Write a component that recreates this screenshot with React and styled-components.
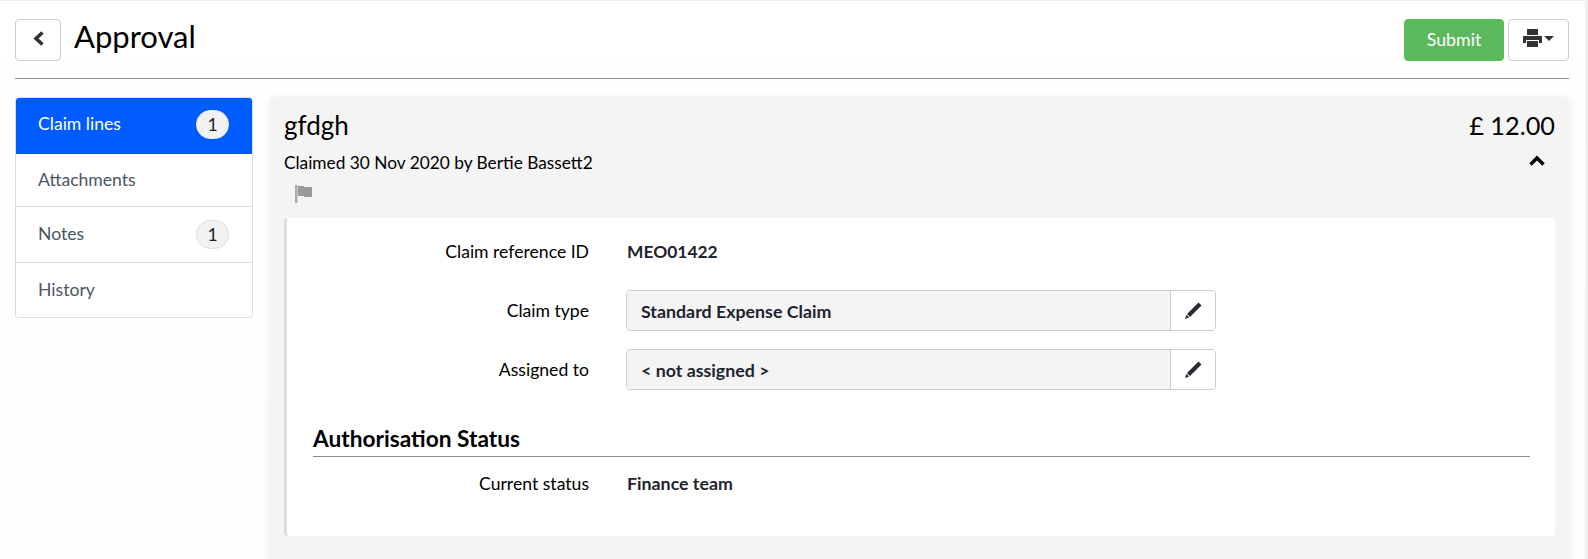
import React from 'react'
import styled, { createGlobalStyle } from 'styled-components'

const GlobalStyle = createGlobalStyle`
  html, body {
    margin: 0;
    height: 559px;
    overflow: hidden;
    background: #fff;
    font-family: Lato, "Open Sans", sans-serif;
    color: #000;
  }
  * { box-sizing: border-box; }
`

const Page = styled.div`
  height: 559px;
  border-top: 1px solid #ececec;
  border-right: 3px solid #f0f0f0;
  padding: 18px 16px 0 15px;
  background: linear-gradient(180deg, #fff 0%, #fdfdfd 100%);
  overflow: hidden;
`

const Header = styled.header`
  display: flex;
  align-items: flex-start;
  justify-content: space-between;
  height: 60px;
  border-bottom: 1px solid #8e8e8e;
`

const TitleGroup = styled.div`
  display: flex;
  align-items: flex-start;
  gap: 13px;
`

const Title = styled.h1`
  margin: -2px 0 0;
  font-size: 31px;
  font-weight: 400;
  line-height: 38px;
`

const Actions = styled.div`
  display: flex;
  gap: 4px;
`

const IconButton = styled.button`
  display: flex;
  align-items: center;
  justify-content: center;
  gap: 2px;
  width: ${p => p.$width}px;
  height: 42px;
  padding: 0 0 4px;
  border: 1px solid #ccc;
  border-radius: 4px;
  background: #fff;
  color: #333;
`

const Caret = styled.span`
  width: 0;
  height: 0;
  border-left: 5px solid transparent;
  border-right: 5px solid transparent;
  border-top: 5px solid #333;
`

const SubmitButton = styled.button`
  width: 100px;
  height: 42px;
  padding: 0 0 2px;
  border: 1px solid #4cc84c;
  border-radius: 4px;
  background: #5cb85c;
  color: #fff;
  font: 400 17.8px Lato, sans-serif;
`

const Body = styled.div`
  display: flex;
  align-items: flex-start;
  gap: 17px;
  margin-top: 18px;
`

const SideNav = styled.nav`
  flex: 0 0 238px;
  display: flex;
  flex-direction: column;
  border: 1px solid #ddd;
  border-radius: 4px;
  background: #fff;
  overflow: hidden;
`

const NavItem = styled.div`
  display: flex;
  align-items: center;
  justify-content: space-between;
  height: ${p => p.$height}px;
  margin: ${p => (p.$active ? '-1px -1px 0' : '0')};
  padding: 0 ${p => (p.$active ? '24px' : '23px')} ${p => p.$lift}px ${p => (p.$active ? '23px' : '22px')};
  border-bottom: ${p => (p.$last || p.$active ? 'none' : '1px solid #ddd')};
  background: ${p => (p.$active ? '#005cff' : '#fff')};
  color: ${p => (p.$active ? '#fff' : '#4a5564')};
  font-size: 17.6px;
`

const Badge = styled.span`
  display: flex;
  align-items: center;
  justify-content: center;
  width: 33px;
  height: 29px;
  margin-top: 3px;
  border: 1px solid ${p => (p.$active ? '#eee' : '#ddd')};
  border-radius: 15px;
  background: #f2f2f2;
  color: #222;
  font-size: 17.6px;
`

const Panel = styled.main`
  flex: 1;
  height: 470px;
  padding: 11px 14px 0;
  border-radius: 4px;
  background: #f4f4f4;
  box-shadow: 0 1px 10px rgba(0, 0, 0, 0.07);
`

const PanelHead = styled.div`
  display: flex;
  align-items: center;
  justify-content: space-between;
  line-height: 34px;
`

const ClaimName = styled.span`
  font-size: 26px;
`

const Amount = styled.span`
  font-size: 25.3px;
`

const SubRow = styled.div`
  display: flex;
  align-items: center;
  justify-content: space-between;
  height: 27px;
  margin-top: 7px;
  padding-right: 10px;
  font-size: 17.3px;
`

const FlagRow = styled.div`
  height: 42px;
  padding: 9px 0 0 11px;
`

const Card = styled.section`
  height: 318px;
  padding: 14px 25px 0 0;
  border-left: 3px solid #ddd;
  border-radius: 4px;
  background: #fff;
`

const Row = styled.div`
  display: grid;
  grid-template-columns: 302px 1fr;
  column-gap: 38px;
  align-items: center;
  height: ${p => p.$height}px;
  margin-top: ${p => p.$gap || 0}px;
  font-size: 17.6px;
`

const Label = styled.span`
  text-align: right;
`

const Value = styled.strong`
  font-weight: 700;
  font-size: ${p => p.$size || 17.8}px;
  color: #1d2430;
`

const InputGroup = styled.div`
  display: flex;
  width: 590px;
  height: 41px;
  margin-left: -1px;
  border: 1px solid #ccc;
  border-radius: 4px;
  overflow: hidden;
`

const InputValue = styled.div`
  flex: 1;
  display: flex;
  align-items: center;
  padding-left: 14px;
  background: #f4f4f4;
  font-weight: 700;
  font-size: 17.8px;
  color: #1d2430;
`

const EditButton = styled.div`
  flex: 0 0 45px;
  display: flex;
  align-items: center;
  justify-content: center;
  border-left: 1px solid #ccc;
  background: #fff;
`

const SectionTitle = styled.h2`
  margin: 26px 0 0 26px;
  padding-bottom: 3px;
  border-bottom: 1px solid #8e8e8e;
  font-size: 22.7px;
  font-weight: 700;
  line-height: 28px;
`

const ChevronSvg = styled.svg`
  display: block;
  margin-bottom: ${p => p.$lift || 0}px;
`

const BackIcon = () => (
  <ChevronSvg width="13" height="15" viewBox="0 0 13 15" fill="none" stroke="#333" strokeWidth="3.6">
    <path d="M10.5 1.5 4 7.5l6.5 6" />
  </ChevronSvg>
)

const UpIcon = () => (
  <ChevronSvg $lift={4} width="16" height="11" viewBox="0 0 16 11" fill="none" stroke="#000" strokeWidth="3.4">
    <path d="M1.5 9.5 8 3l6.5 6.5" />
  </ChevronSvg>
)

const PrintIcon = () => (
  <svg width="19" height="18" viewBox="0 0 19 18" fill="#333">
    <path d="M4 0h11v6H4z" />
    <path d="M0 7h19v7h-3v-3H3v3H0z" />
    <path d="M4 12h11v6H4z" />
  </svg>
)

const PencilIcon = () => (
  <svg width="18" height="18" viewBox="0 0 18 18" fill="#2b2b33">
    <path d="M14.5 .5 17.5 3.5 6 15 3 12z" />
    <path d="M2.4 12.8 5.2 15.6 1 17z" />
  </svg>
)

const FlagIcon = () => (
  <svg width="18" height="18" viewBox="0 0 18 18" fill="#9a9a9a">
    <rect x="0" y="0" width="2.5" height="18" fill="#aaa" />
    <path d="M3 1h6v1h8v10H9v-1H3z" />
  </svg>
)

export default function App() {
  return (
    <Page>
      <GlobalStyle />
      <Header>
        <TitleGroup>
          <IconButton $width={46}><BackIcon /></IconButton>
          <Title>Approval</Title>
        </TitleGroup>
        <Actions>
          <SubmitButton>Submit</SubmitButton>
          <IconButton $width={61}><PrintIcon /><Caret /></IconButton>
        </Actions>
      </Header>
      <Body>
        <SideNav>
          <NavItem $active $height={57} $lift={5}>Claim lines<Badge $active>1</Badge></NavItem>
          <NavItem $height={53} $lift={1}>Attachments</NavItem>
          <NavItem $height={56} $lift={3}>Notes<Badge>1</Badge></NavItem>
          <NavItem $height={54} $lift={1} $last>History</NavItem>
        </SideNav>
        <Panel>
          <PanelHead><ClaimName>gfdgh</ClaimName><Amount>£ 12.00</Amount></PanelHead>
          <SubRow>
            <span>Claimed 30 Nov 2020 by Bertie Bassett2</span>
            <UpIcon />
          </SubRow>
          <FlagRow><FlagIcon /></FlagRow>
          <Card>
            <Row $height={38}><Label>Claim reference ID</Label><Value $size={17.4}>MEO01422</Value></Row>
            <Row $height={59} $gap={11}>
              <Label>Claim type</Label>
              <InputGroup>
                <InputValue>Standard Expense Claim</InputValue>
                <EditButton><PencilIcon /></EditButton>
              </InputGroup>
            </Row>
            <Row $height={59}>
              <Label>Assigned to</Label>
              <InputGroup>
                <InputValue>{'< not assigned >'}</InputValue>
                <EditButton><PencilIcon /></EditButton>
              </InputGroup>
            </Row>
            <SectionTitle>Authorisation Status</SectionTitle>
            <Row $height={52}><Label>Current status</Label><Value>Finance team</Value></Row>
          </Card>
        </Panel>
      </Body>
    </Page>
  )
}
